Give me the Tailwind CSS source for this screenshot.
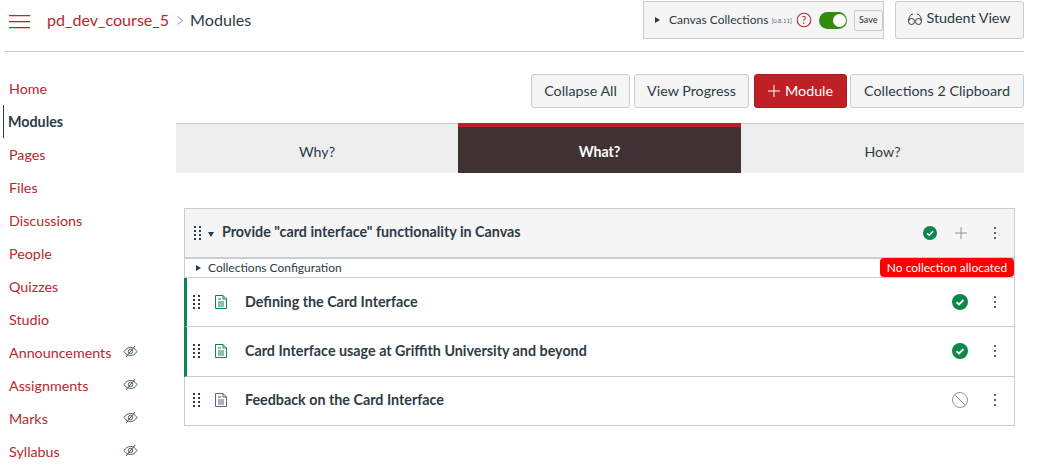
<!DOCTYPE html>
<html>
<head>
<meta charset="utf-8" />
<title>Modules</title>
<script src="https://cdn.jsdelivr.net/npm/@tailwindcss/browser@4"></script>
</head>
<body class="bg-white overflow-hidden h-[472px] font-['Lato','Noto_Sans',sans-serif] text-[#2d3b45]">

<!-- top bar -->
<header class="ml-1 mr-5 h-[52px] border-b border-[#c7cdd1] flex items-start">
  <div class="w-[21px] ml-[5px] mt-[15px] flex flex-col gap-1">
    <div class="h-[2px] bg-[linear-gradient(#b9272d_50%,#e8c5c6_50%)]"></div>
    <div class="h-[2px] bg-[linear-gradient(#b9272d_50%,#e8c5c6_50%)]"></div>
    <div class="h-[2px] bg-[linear-gradient(#b9272d_50%,#e8c5c6_50%)]"></div>
  </div>
  <div class="ml-[17px] mt-[9px] text-[16.100px] leading-[22px] flex items-center">
    <span class="text-[#b9272d]">pd_dev_course_5</span>
    <svg width="6" height="9" viewBox="0 0 6 9" fill="none" stroke="#8b969e" stroke-width="1" class="ml-[8px] mr-[7px] mt-px"><path d="M.5.500L5.500 4.500L.5 8.500"/></svg>
    <span>Modules</span>
  </div>
  <div class="ml-auto mt-px w-[241px] h-[38px] bg-[#f5f5f5] border border-[#c7cdd1] flex items-center pl-[11px]">
    <svg width="5" height="6" viewBox="0 0 5 6" class="mr-[9px]"><path d="M0 0L5 3L0 6Z" fill="#2d3b45"/></svg>
    <span class="text-[12px] whitespace-nowrap">Canvas Collections</span>
    <span class="text-[6px] ml-[3px] text-[#556572] whitespace-nowrap">[0.8.11]</span>
    <svg width="16" height="16" viewBox="0 0 16 16" class="ml-1"><circle cx="8" cy="8" r="6.800" fill="none" stroke="#b9272d" stroke-width="1.100"/><text x="8" y="12" font-size="11" text-anchor="middle" fill="#b9272d" font-family="Lato">?</text></svg>
    <div class="ml-[7px] w-7 h-[17px] rounded-full bg-[#328a0e] relative">
      <div class="absolute right-px top-[2px] w-[13px] h-[13px] rounded-full bg-white"></div>
    </div>
    <div class="ml-[7px] w-[29px] h-[21px] border border-[#c7cdd1] rounded-[2px] bg-[#f5f5f5] text-[9px] font-medium flex items-center justify-center text-[#2d3b45]">Save</div>
  </div>
  <div class="ml-[11px] mt-px w-[129px] h-[38px] bg-[#f5f5f5] border border-[#c7cdd1] rounded-[3px] flex items-center justify-center text-[14.300px] pb-[5px]">
    <svg width="14" height="13" viewBox="0 0 14 13" fill="none" stroke="#2d3b45" stroke-width="1" class="mr-[4px] mt-[3px]"><circle cx="3.500" cy="8.500" r="3"/><circle cx="10.500" cy="8.500" r="3"/><path d="M.5 8.500C.5 5 2 1.500 5 1M13.500 8.500C13.500 5 12 1.500 9 1"/></svg>
    <span>Student View</span>
  </div>
</header>

<div class="flex">
  <!-- course nav -->
  <nav class="w-[176px] shrink-0 pt-5 text-[14.300px] text-[#b9272d]">
    <div class="h-[33px] pl-[9px] flex items-center">Home</div>
    <div class="h-[33px] ml-[3px] pl-1 border-l border-[#2d3b45] flex items-center font-bold text-[#2d3b45]">Modules</div>
    <div class="h-[33px] pl-[9px] flex items-center">Pages</div>
    <div class="h-[33px] pl-[9px] flex items-center">Files</div>
    <div class="h-[33px] pl-[9px] flex items-center">Discussions</div>
    <div class="h-[33px] pl-[9px] flex items-center">People</div>
    <div class="h-[33px] pl-[9px] flex items-center">Quizzes</div>
    <div class="h-[33px] pl-[9px] flex items-center">Studio</div>
    <div class="h-[33px] pl-[9px] flex items-center">
      <span class="w-[114px]">Announcements</span>
      <svg width="15" height="13" viewBox="0 0 15 13" fill="none" stroke="#4a5a68" stroke-width="1" class="-mt-[2px]"><path d="M1 6.500C3 3.500 5 2.500 7.500 2.500S12 3.500 14 6.500C12 9.500 10 10.500 7.500 10.500S3 9.500 1 6.500Z"/><circle cx="7.500" cy="6.500" r="2.200"/><path d="M12 1L3 12"/></svg>
    </div>
    <div class="h-[33px] pl-[9px] flex items-center">
      <span class="w-[114px]">Assignments</span>
      <svg width="15" height="13" viewBox="0 0 15 13" fill="none" stroke="#4a5a68" stroke-width="1" class="-mt-[2px]"><path d="M1 6.500C3 3.500 5 2.500 7.500 2.500S12 3.500 14 6.500C12 9.500 10 10.500 7.500 10.500S3 9.500 1 6.500Z"/><circle cx="7.500" cy="6.500" r="2.200"/><path d="M12 1L3 12"/></svg>
    </div>
    <div class="h-[33px] pl-[9px] flex items-center">
      <span class="w-[114px]">Marks</span>
      <svg width="15" height="13" viewBox="0 0 15 13" fill="none" stroke="#4a5a68" stroke-width="1" class="-mt-[2px]"><path d="M1 6.500C3 3.500 5 2.500 7.500 2.500S12 3.500 14 6.500C12 9.500 10 10.500 7.500 10.500S3 9.500 1 6.500Z"/><circle cx="7.500" cy="6.500" r="2.200"/><path d="M12 1L3 12"/></svg>
    </div>
    <div class="h-[33px] pl-[9px] flex items-center">
      <span class="w-[114px]">Syllabus</span>
      <svg width="15" height="13" viewBox="0 0 15 13" fill="none" stroke="#4a5a68" stroke-width="1" class="-mt-[2px]"><path d="M1 6.500C3 3.500 5 2.500 7.500 2.500S12 3.500 14 6.500C12 9.500 10 10.500 7.500 10.500S3 9.500 1 6.500Z"/><circle cx="7.500" cy="6.500" r="2.200"/><path d="M12 1L3 12"/></svg>
    </div>
  </nav>

  <main class="w-[848px]">
    <!-- toolbar -->
    <div class="mt-[22px] flex justify-end text-[14.300px]">
      <div class="h-[34px] w-[99px] bg-[#f5f5f5] border border-[#c7cdd1] rounded-[3px] flex items-center justify-center">Collapse All</div>
      <div class="h-[34px] w-[115px] ml-1 bg-[#f5f5f5] border border-[#c7cdd1] rounded-[3px] flex items-center justify-center">View Progress</div>
      <div class="h-[34px] w-[93px] ml-[5px] bg-[#bf2026] border border-[#a81c21] rounded-[3px] flex items-center justify-center text-white">
        <svg width="12" height="12" viewBox="0 0 12 12" stroke="#fff" stroke-width="1" class="mr-[5px]"><path d="M6 0V12M0 6H12"/></svg>
        Module
      </div>
      <div class="h-[34px] w-[174px] ml-[3px] bg-[#f5f5f5] border border-[#c7cdd1] rounded-[3px] flex items-center justify-center">Collections 2 Clipboard</div>
    </div>

    <!-- tabs -->
    <div class="mt-[15px] grid grid-cols-[282px_283px_283px] h-[50px] text-[14.200px] bg-[#eeeeee] border-t border-[#c7cdd1]">
      <div class="flex items-center justify-center pt-[6px]">Why?</div>
      <div class="-mt-px border-t-[4px] border-[#bf2026] bg-[#403232] text-white font-bold flex items-center justify-center pt-1">What?</div>
      <div class="flex items-center justify-center pt-[6px]">How?</div>
    </div>

    <!-- module -->
    <div class="mt-[35px] ml-2 w-[831px] border border-[#c7cdd1] relative">
      <div class="h-[50px] bg-[#f5f5f5] border-b-2 border-[#c7cdd1] flex items-center pl-[9px] pr-[17px]">
        <svg width="8" height="14" viewBox="0 0 8 14" fill="#2d3b45"><path d="M0 0h2v2H0zM5 0h2v2H5zM0 4h2v2H0zM5 4h2v2H5zM0 8h2v2H0zM5 8h2v2H5zM0 12h2v2H0zM5 12h2v2H5z"/></svg>
        <svg width="6" height="5" viewBox="0 0 6 5" class="ml-[6px] mt-[2px]"><path d="M0 0H6L3 5Z" fill="#2d3b45"/></svg>
        <span class="ml-2 -mt-[2px] text-[14.300px] font-bold">Provide "card interface" functionality in Canvas</span>
        <svg width="14" height="14" viewBox="0 0 16 16" class="ml-auto"><circle cx="8" cy="8" r="8" fill="#0b874b"/><path d="M4.500 8.300L7 10.500L11.500 6" fill="none" stroke="#fff" stroke-width="1.800"/></svg>
        <svg width="12" height="12" viewBox="0 0 12 12" stroke="#8b969e" stroke-width="1" class="ml-[18px]"><path d="M6 0V12M0 6H12"/></svg>
        <svg width="4" height="12" viewBox="0 0 4 12" fill="#556572" class="ml-[26px]"><path d="M1 0h2v2H1zM1 5h2v2H1zM1 10h2v2H1z"/></svg>
      </div>
      <div class="h-[19px] border-b border-[#c7cdd1] flex items-center pl-[11px] text-[12px] relative">
        <svg width="5" height="6" viewBox="0 0 5 6" class="mr-[7px]"><path d="M0 0L5 3L0 6Z" fill="#2d3b45"/></svg>
        Collections Configuration
        <span class="absolute right-0 -top-px h-[19px] w-[134px] rounded-[4px] bg-[#ff0000] text-white text-[12px] flex items-center justify-center">No collection allocated</span>
      </div>

      <div class="h-[49px] border-b border-[#c7cdd1] flex items-center -ml-px border-l-[3px] border-l-[#0b874b] pl-[6px] pr-[17px]">
        <svg width="8" height="14" viewBox="0 0 8 14" fill="#2d3b45"><path d="M0 0h2v2H0zM5 0h2v2H5zM0 4h2v2H0zM5 4h2v2H5zM0 8h2v2H0zM5 8h2v2H5zM0 12h2v2H0zM5 12h2v2H5z"/></svg>
        <svg width="12" height="14" viewBox="0 0 12 14" fill="none" stroke="#0b874b" stroke-width="1" class="ml-[14px]"><path d="M.5.500H8L11.500 4V13.500H.500ZM8 .500V4H11.500M3 4H6M3 7H9M3 9H9M3 11H9"/></svg>
        <span class="ml-[18px] text-[14.300px] font-bold">Defining the Card Interface</span>
        <svg width="16" height="16" viewBox="0 0 16 16" class="ml-auto"><circle cx="8" cy="8" r="8" fill="#0b874b"/><path d="M4.500 8.300L7 10.500L11.500 6" fill="none" stroke="#fff" stroke-width="1.800"/></svg>
        <svg width="4" height="12" viewBox="0 0 4 12" fill="#556572" class="ml-[25px]"><path d="M1 0h2v2H1zM1 5h2v2H1zM1 10h2v2H1z"/></svg>
      </div>

      <div class="h-[50px] border-b border-[#c7cdd1] flex items-center -ml-px border-l-[3px] border-l-[#0b874b] pl-[6px] pr-[17px] pb-px">
        <svg width="8" height="14" viewBox="0 0 8 14" fill="#2d3b45"><path d="M0 0h2v2H0zM5 0h2v2H5zM0 4h2v2H0zM5 4h2v2H5zM0 8h2v2H0zM5 8h2v2H5zM0 12h2v2H0zM5 12h2v2H5z"/></svg>
        <svg width="12" height="14" viewBox="0 0 12 14" fill="none" stroke="#0b874b" stroke-width="1" class="ml-[14px]"><path d="M.5.500H8L11.500 4V13.500H.500ZM8 .500V4H11.500M3 4H6M3 7H9M3 9H9M3 11H9"/></svg>
        <span class="ml-[18px] text-[14.300px] font-bold">Card Interface usage at Griffith University and beyond</span>
        <svg width="16" height="16" viewBox="0 0 16 16" class="ml-auto"><circle cx="8" cy="8" r="8" fill="#0b874b"/><path d="M4.500 8.300L7 10.500L11.500 6" fill="none" stroke="#fff" stroke-width="1.800"/></svg>
        <svg width="4" height="12" viewBox="0 0 4 12" fill="#556572" class="ml-[25px]"><path d="M1 0h2v2H1zM1 5h2v2H1zM1 10h2v2H1z"/></svg>
      </div>

      <div class="h-[48px] flex items-center pl-2 pr-[17px] pb-[2px]">
        <svg width="8" height="14" viewBox="0 0 8 14" fill="#2d3b45"><path d="M0 0h2v2H0zM5 0h2v2H5zM0 4h2v2H0zM5 4h2v2H5zM0 8h2v2H0zM5 8h2v2H5zM0 12h2v2H0zM5 12h2v2H5z"/></svg>
        <svg width="12" height="14" viewBox="0 0 12 14" fill="none" stroke="#556572" stroke-width="1" class="ml-[14px]"><path d="M.5.500H8L11.500 4V13.500H.500ZM8 .500V4H11.500M3 4H6M3 7H9M3 9H9M3 11H9"/></svg>
        <span class="ml-[18px] text-[14.300px] font-bold">Feedback on the Card Interface</span>
        <svg width="16" height="16" viewBox="0 0 16 16" fill="none" stroke="#8b969e" stroke-width="1" class="ml-auto"><circle cx="8" cy="8" r="7.500"/><path d="M2.700 2.700L13.300 13.300"/></svg>
        <svg width="4" height="12" viewBox="0 0 4 12" fill="#556572" class="ml-[25px]"><path d="M1 0h2v2H1zM1 5h2v2H1zM1 10h2v2H1z"/></svg>
      </div>
    </div>
  </main>
</div>
</body>
</html>
